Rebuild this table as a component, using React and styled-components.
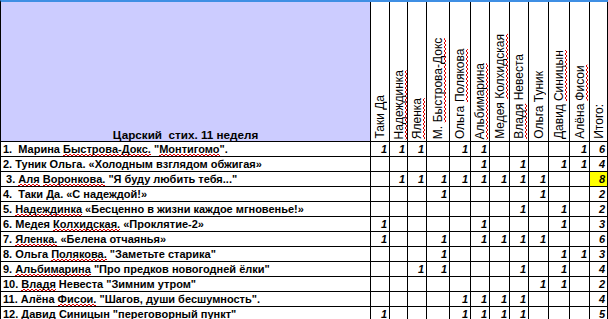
import React from "react";
import styled, { createGlobalStyle, css } from "styled-components";

const LINE = "#000000";
const HEADER_BG = "#ccccff";
const HIGHLIGHT = "#ffff00";
const TOP_BAR = "#3f8fe4";
const SPELL_RED = "#e00000";

const GlobalStyle = createGlobalStyle`
  html, body {
    margin: 0;
    padding: 0;
    background: #ffffff;
    overflow: hidden;
  }
`;

const Sheet = styled.div`
  display: grid;
  grid-template-columns: 370px 19px 18px 19px 23px 21px 19px 20px 19px 20px 21px 20px 18px;
  grid-template-rows: 140px;
  grid-auto-rows: 15px;
  width: 608px;
  box-sizing: border-box;
  border-top: 2px solid ${TOP_BAR};
  border-left: 1px solid ${LINE};
  font-family: "Liberation Sans", Arial, sans-serif;
  color: #000;
`;

const Cell = styled.div`
  box-sizing: border-box;
  border-right: 1px solid ${LINE};
  border-bottom: 1px solid ${LINE};
  min-width: 0;
`;

const TitleCell = styled(Cell)`
  background: ${HEADER_BG};
  display: flex;
  align-items: flex-end;
  justify-content: center;
  font-size: 11.7px;
  font-weight: 700;
  line-height: 12px;
  white-space: pre;
`;

const NameHead = styled(Cell)`
  display: flex;
  align-items: flex-end;
  justify-content: center;
  padding-bottom: 2px;
  overflow: hidden;
`;

const VerticalLabel = styled.span`
  writing-mode: vertical-rl;
  transform: rotate(180deg);
  font-size: 12px;
  line-height: 14px;
  white-space: nowrap;
`;

const RowLabel = styled(Cell)`
  padding-left: 2px;
  font-size: 11px;
  font-weight: 700;
  line-height: 14px;
  white-space: pre;
`;

const MarkCell = styled(Cell)`
  padding-right: 2px;
  text-align: right;
  font-size: 11px;
  font-weight: 700;
  font-style: italic;
  line-height: 14px;
  overflow: hidden;
  background: ${(p) => (p.$highlight ? HIGHLIGHT : "transparent")};
`;

// spell-checker squiggle drawn as a 1px square wave under the word
const Typo = styled.span`
  background-repeat: no-repeat;
  ${(p) =>
    p.$vertical
      ? css`
          padding-left: 1px;
          background-image: repeating-linear-gradient(180deg, ${SPELL_RED} 0 2px, transparent 2px 4px),
            repeating-linear-gradient(180deg, transparent 0 2px, ${SPELL_RED} 2px 4px);
          background-size: 1px 100%, 1px 100%;
          background-position: 0 0, 1px 0;
        `
      : css`
          padding-bottom: 1px;
          background-image: repeating-linear-gradient(90deg, ${SPELL_RED} 0 2px, transparent 2px 4px),
            repeating-linear-gradient(90deg, transparent 0 2px, ${SPELL_RED} 2px 4px);
          background-size: 100% 1px, 100% 1px;
          background-position: 0 100%, 0 calc(100% - 1px);
        `}
`;

const judges = [
  { pre: "Таки Да" },
  { typo: "Надеждинка" },
  { typo: "Яленка" },
  { pre: "М. ", typo: "Быстрова-Докс" },
  { pre: "Ольга ", typo: "Полякова" },
  { typo: "Альбимарина" },
  { pre: "Медея ", typo: "Колхидская" },
  { typo: "Владя", post: " Невеста" },
  { pre: "Ольга Туник" },
  { pre: "Давид ", typo: "Синицын" },
  { pre: "Алёна ", typo: "Фисои" },
  { pre: "Итого:" },
];

const entries = [
  {
    label: (
      <>
        {"1.  Марина "}
        <Typo>Быстрова-Докс.</Typo> "<Typo>Монтигомо</Typo>".
      </>
    ),
    marks: [1, 1, 1, 0, 1, 1, 0, 0, 0, 0, 1],
  },
  {
    label: <>2. Туник Ольга. «Холодным взглядом обжигая»</>,
    marks: [0, 0, 0, 0, 0, 1, 0, 1, 0, 1, 1],
  },
  {
    label: (
      <>
        {" 3. "}
        <Typo>Аля</Typo> <Typo>Воронкова.</Typo> "Я буду любить тебя..."
      </>
    ),
    marks: [0, 1, 1, 1, 1, 1, 1, 1, 1, 0, 0],
    highlight: true,
  },
  {
    label: <>{"4.  Таки Да. «С надеждой!»"}</>,
    marks: [0, 0, 0, 1, 0, 0, 0, 0, 1, 0, 0],
  },
  {
    label: (
      <>
        5. <Typo>Надеждинка</Typo> «Бесценно в жизни каждое мгновенье!»
      </>
    ),
    marks: [0, 0, 0, 0, 0, 0, 0, 1, 0, 1, 0],
  },
  {
    label: (
      <>
        6. Медея <Typo>Колхидская.</Typo> «Проклятие-2»
      </>
    ),
    marks: [1, 0, 0, 0, 0, 1, 0, 0, 0, 1, 0],
  },
  {
    label: (
      <>
        7. <Typo>Яленка.</Typo> «Белена отчаянья»
      </>
    ),
    marks: [1, 0, 0, 1, 0, 1, 1, 1, 1, 0, 0],
  },
  {
    label: (
      <>
        8. Ольга <Typo>Полякова.</Typo> "Заметьте старика"
      </>
    ),
    marks: [0, 0, 0, 1, 0, 0, 0, 0, 0, 1, 1],
  },
  {
    label: (
      <>
        9. <Typo>Альбимарина</Typo> "Про предков новогодней ёлки"
      </>
    ),
    marks: [0, 0, 1, 1, 0, 0, 0, 1, 0, 1, 0],
  },
  {
    label: (
      <>
        10. <Typo>Владя</Typo> Невеста "Зимним утром"
      </>
    ),
    marks: [0, 0, 0, 0, 0, 0, 0, 0, 1, 1, 0],
  },
  {
    label: (
      <>
        11. Алёна <Typo>Фисои.</Typo> "Шагов, души бесшумность".
      </>
    ),
    marks: [0, 0, 0, 0, 1, 1, 1, 1, 0, 0, 0],
  },
  {
    label: (
      <>
        12. Давид <Typo>Синицын</Typo> "переговорный пункт"
      </>
    ),
    marks: [1, 0, 0, 0, 1, 1, 1, 1, 0, 0, 0],
  },
];

const App = () => {
  return (
    <>
      <GlobalStyle />
      <Sheet>
        <TitleCell>{"Царский  стих. 11 неделя"}</TitleCell>
        {judges.map((j, i) => (
          <NameHead key={i}>
            <VerticalLabel>
              {j.pre}
              {j.typo && <Typo $vertical>{j.typo}</Typo>}
              {j.post}
            </VerticalLabel>
          </NameHead>
        ))}

        {entries.map((row, r) => {
          const total = row.marks.reduce((a, b) => a + b, 0);
          return (
            <React.Fragment key={r}>
              <RowLabel>{row.label}</RowLabel>
              {row.marks.map((m, c) => (
                <MarkCell key={c}>{m ? 1 : ""}</MarkCell>
              ))}
              <MarkCell $highlight={row.highlight}>{total}</MarkCell>
            </React.Fragment>
          );
        })}
      </Sheet>
    </>
  );
};

export default App;
